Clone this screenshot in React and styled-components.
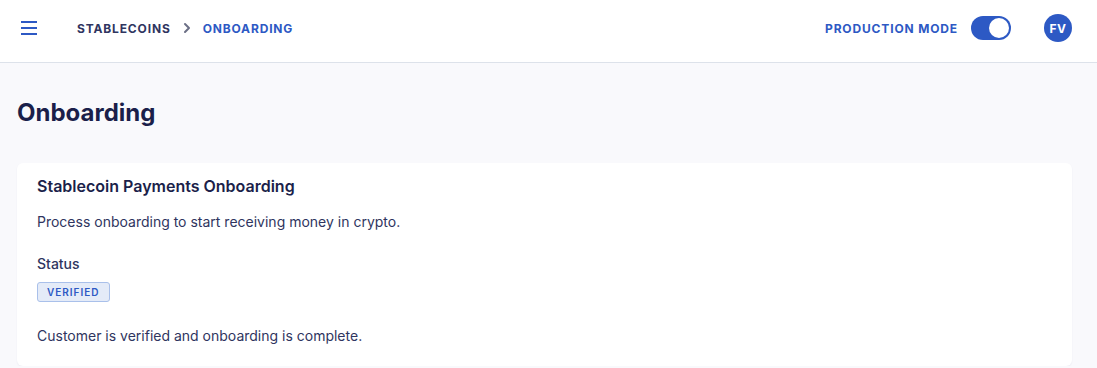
import styled, { createGlobalStyle } from "styled-components"

const Global = createGlobalStyle`
  body {
    margin: 0;
    font-family: Inter, "Noto Sans", sans-serif;
    background: #f9f9fc;
    color: #1b1f4a;
  }
`

const Header = styled.header`
  height: 56px;
  padding: 0 25px 6px 21px;
  background: #fff;
  border-bottom: 1px solid #dde2ea;
  display: flex;
  align-items: center;
`

const Burger = styled.button`
  border: 0;
  background: none;
  padding: 0;
  width: 16px;
  display: flex;
  flex-direction: column;
  gap: 4px;
  margin-right: 40px;

  span {
    height: 2px;
    background: #2d59c4;
    display: block;
  }
`

const Crumbs = styled.nav`
  display: flex;
  align-items: center;
  gap: 8px;
  font-size: 12px;
  font-weight: 700;
  letter-spacing: 0.85px;
  flex: 1;
`

const Crumb = styled.span`
  color: ${({ $active }) => ($active ? "#2d59c4" : "#2f3560")};
`

const Right = styled.div`
  display: flex;
  align-items: center;
`

const ModeLabel = styled.span`
  font-size: 12px;
  font-weight: 700;
  letter-spacing: 0.85px;
  color: #2d59c4;
  margin-right: 13px;
`

const Toggle = styled.div`
  width: 40px;
  height: 24px;
  border-radius: 12px;
  background: #2d59c4;
  position: relative;
  margin-right: 33px;

  &::after {
    content: "";
    position: absolute;
    right: 2px;
    top: 2px;
    width: 20px;
    height: 20px;
    border-radius: 50%;
    background: #fff;
  }
`

const Avatar = styled.div`
  width: 28px;
  height: 28px;
  border-radius: 50%;
  background: #2d59c4;
  color: #fff;
  font-size: 12px;
  font-weight: 700;
  display: flex;
  align-items: center;
  justify-content: center;
  letter-spacing: 0.5px;
`

const Main = styled.main`
  padding: 35px 25px 0 17px;
`

const Title = styled.h1`
  font-size: 24px;
  font-weight: 700;
  margin: 0 0 35px;
  line-height: 30px;
`

const Card = styled.section`
  background: #fff;
  border-radius: 6px;
  box-shadow: 0 1px 2px rgba(30, 40, 90, 0.06);
  padding: 14px 20px 21px;
`

const CardTitle = styled.h2`
  font-size: 16px;
  font-weight: 600;
  margin: 0 0 18px;
  line-height: 18px;
`

const Text = styled.p`
  font-size: 14px;
  color: #2f3560;
  margin: 0 0 ${({ $mb }) => $mb || 0}px;
  line-height: 18px;
`

const Label = styled.div`
  font-size: 14px;
  font-weight: 500;
  color: #2f3560;
  margin-bottom: 7px;
  line-height: 18px;
`

const Badge = styled.span`
  display: inline-block;
  font-size: 10px;
  font-weight: 600;
  letter-spacing: 1px;
  color: #2d59c4;
  background: #e4ebf8;
  border: 1px solid #a9c0ea;
  border-radius: 3px;
  padding: 2px 9px;
  line-height: 14px;
  margin-bottom: 25px;
`

export default function App() {
  return (
    <>
      <Global />
      <Header>
        <Burger aria-label="menu">
          <span />
          <span />
          <span />
        </Burger>
        <Crumbs>
          <Crumb>STABLECOINS</Crumb>
          <svg width="16" height="16" viewBox="0 0 24 24" fill="none" stroke="#6b6f85" strokeWidth="3" strokeLinecap="round" strokeLinejoin="round">
            <path d="M9 6l6 6-6 6" />
          </svg>
          <Crumb $active>ONBOARDING</Crumb>
        </Crumbs>
        <Right>
          <ModeLabel>PRODUCTION MODE</ModeLabel>
          <Toggle />
          <Avatar>FV</Avatar>
        </Right>
      </Header>
      <Main>
        <Title>Onboarding</Title>
        <Card>
          <CardTitle>Stablecoin Payments Onboarding</CardTitle>
          <Text $mb={24}>Process onboarding to start receiving money in crypto.</Text>
          <Label>Status</Label>
          <Badge>VERIFIED</Badge>
          <Text>Customer is verified and onboarding is complete.</Text>
        </Card>
      </Main>
    </>
  )
}
